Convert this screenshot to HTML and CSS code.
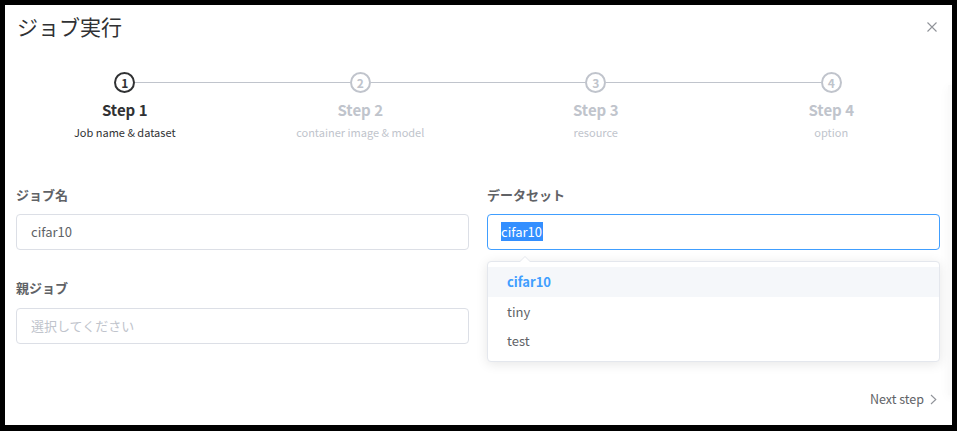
FILE: index.html
```html
<!DOCTYPE html>
<html lang="ja">
<head>
<meta charset="utf-8">
<title>ジョブ実行</title>
<link rel="stylesheet" href="styles.css">
</head>
<body>
<div class="dialog">
  <div class="side-popper"></div>
  <div class="header">
    <span class="title">ジョブ実行</span>
    <svg class="close" width="10" height="10" viewBox="0 0 10 10"><path d="M0.5 0.5L9.5 9.5M9.5 0.5L0.5 9.5" stroke="#909399" stroke-width="1.1" fill="none"/></svg>
  </div>
  <div class="steps">
    <div class="step active">
      <div class="step-head"><span class="circle">1</span></div>
      <div class="step-title">Step 1</div>
      <div class="step-desc">Job name &amp; dataset</div>
    </div>
    <div class="step">
      <div class="step-head"><span class="circle">2</span></div>
      <div class="step-title">Step 2</div>
      <div class="step-desc">container image &amp; model</div>
    </div>
    <div class="step">
      <div class="step-head"><span class="circle">3</span></div>
      <div class="step-title">Step 3</div>
      <div class="step-desc">resource</div>
    </div>
    <div class="step">
      <div class="step-head"><span class="circle">4</span></div>
      <div class="step-title">Step 4</div>
      <div class="step-desc">option</div>
    </div>
  </div>
  <div class="form">
    <div class="field">
      <div class="label">ジョブ名</div>
      <div class="input">cifar10</div>
    </div>
    <div class="field">
      <div class="label">データセット</div>
      <div class="input focus"><span class="sel">cifar10</span></div>
      <div class="dropdown">
        <span class="arrow"></span>
        <div class="opt selected">cifar10</div>
        <div class="opt">tiny</div>
        <div class="opt">test</div>
      </div>
    </div>
    <div class="field second">
      <div class="label">親ジョブ</div>
      <div class="input placeholder">選択してください</div>
    </div>
  </div>
  <div class="footer">
    <span class="next">Next step</span>
    <svg class="chev" width="7" height="11" viewBox="0 0 7 11"><path d="M1 1L5.8 5.5L1 10" stroke="#909399" stroke-width="1.1" fill="none"/></svg>
  </div>
</div>
</body>
</html>
```
FILE: styles.css
```css
* { box-sizing: border-box; }
html, body { margin: 0; padding: 0; }
body {
  background: #000;
  width: 957px;
  height: 431px;
  overflow: hidden;
  font-family: "Noto Sans CJK JP", "Noto Sans", sans-serif;
  padding: 5px;
}
.dialog {
  width: 947px;
  height: 420px;
  background: #fff;
  position: relative;
  overflow: hidden;
}
.side-popper {
  position: absolute;
  left: 943px;
  top: 80px;
  width: 40px;
  height: 310px;
  background: #fafafa;
  box-shadow: 0 2px 10px rgba(0,0,0,0.04);
}
.header {
  height: 42px;
  display: flex;
  align-items: center;
  justify-content: space-between;
  padding: 0 15px 0 12px;
}
.title {
  font-size: 21px;
  color: #303133;
  line-height: 28px;
}
.close { display: block; margin-top: 2px; }
.steps {
  display: flex;
  margin: 24px 3px 0 2px;
}
.step {
  flex: 1;
  display: flex;
  flex-direction: column;
  align-items: center;
  color: #c0c4cc;
}
.step-head {
  width: 100%;
  display: flex;
  align-items: center;
  height: 22px;
}
.step-head::before, .step-head::after {
  content: "";
  flex: 1;
  height: 1px;
  background: #c0c4cc;
}
.step:first-child .step-head::before { background: transparent; }
.step:last-child .step-head::after { background: transparent; }
.circle {
  width: 21px;
  height: 21px;
  border: 2px solid #c0c4cc;
  border-radius: 50%;
  font-size: 12px;
  font-weight: 700;
  line-height: 17px;
  text-align: center;
  color: #c0c4cc;
}
.step-title {
  margin-top: 7px;
  font-size: 15px;
  font-weight: 700;
  line-height: 20px;
}
.step-desc {
  margin-top: 4px;
  font-size: 11px;
  line-height: 16px;
}
.step.active { color: #303133; }
.step.active .circle { border-color: #303133; color: #303133; }
.form {
  display: grid;
  grid-template-columns: 453px 453px;
  column-gap: 18px;
  row-gap: 28px;
  padding: 0 12px 0 11px;
  margin-top: 45px;
}
.field { position: relative; }
.label {
  font-size: 13px;
  font-weight: 700;
  color: #606266;
  line-height: 20px;
  margin-bottom: 9px;
}
.second .label { margin-bottom: 10px; }
.input {
  height: 36px;
  border: 1px solid #dcdfe6;
  border-radius: 4px;
  padding: 0 14px;
  font-size: 13px;
  line-height: 34px;
  color: #606266;
}
.input.focus { border-color: #409eff; }
.input.placeholder { color: #c0c4cc; }
.sel {
  background: #338fff;
  color: #fff;
  display: inline-block;
  line-height: 19px;
  padding: 0 1px 0 0;
  margin-left: -1px;
}
.dropdown {
  position: absolute;
  left: 0;
  top: 76px;
  width: 453px;
  background: #fff;
  border: 1px solid #e4e7ed;
  border-radius: 4px;
  box-shadow: 0 2px 12px rgba(0,0,0,0.1);
  padding: 5px 0 6px;
  z-index: 2;
}
.arrow {
  position: absolute;
  left: 31px;
  top: -6px;
  width: 0;
  height: 0;
  border-left: 6px solid transparent;
  border-right: 6px solid transparent;
  border-bottom: 6px solid #e4e7ed;
}
.arrow::after {
  content: "";
  position: absolute;
  left: -5px;
  top: 1px;
  border-left: 5px solid transparent;
  border-right: 5px solid transparent;
  border-bottom: 5px solid #fff;
}
.opt {
  height: 29px;
  line-height: 29px;
  padding: 0 19px;
  font-size: 13px;
  color: #606266;
}
.opt.selected {
  background: #f5f7fa;
  color: #409eff;
  font-weight: 700;
  height: 30px;
  line-height: 30px;
}
.footer {
  display: flex;
  justify-content: flex-end;
  align-items: center;
  gap: 6px;
  margin-top: 45px;
  padding-right: 15px;
  height: 20px;
}
.next {
  font-size: 12.5px;
  color: #606266;
  line-height: 20px;
}
.chev { display: block; }
```
